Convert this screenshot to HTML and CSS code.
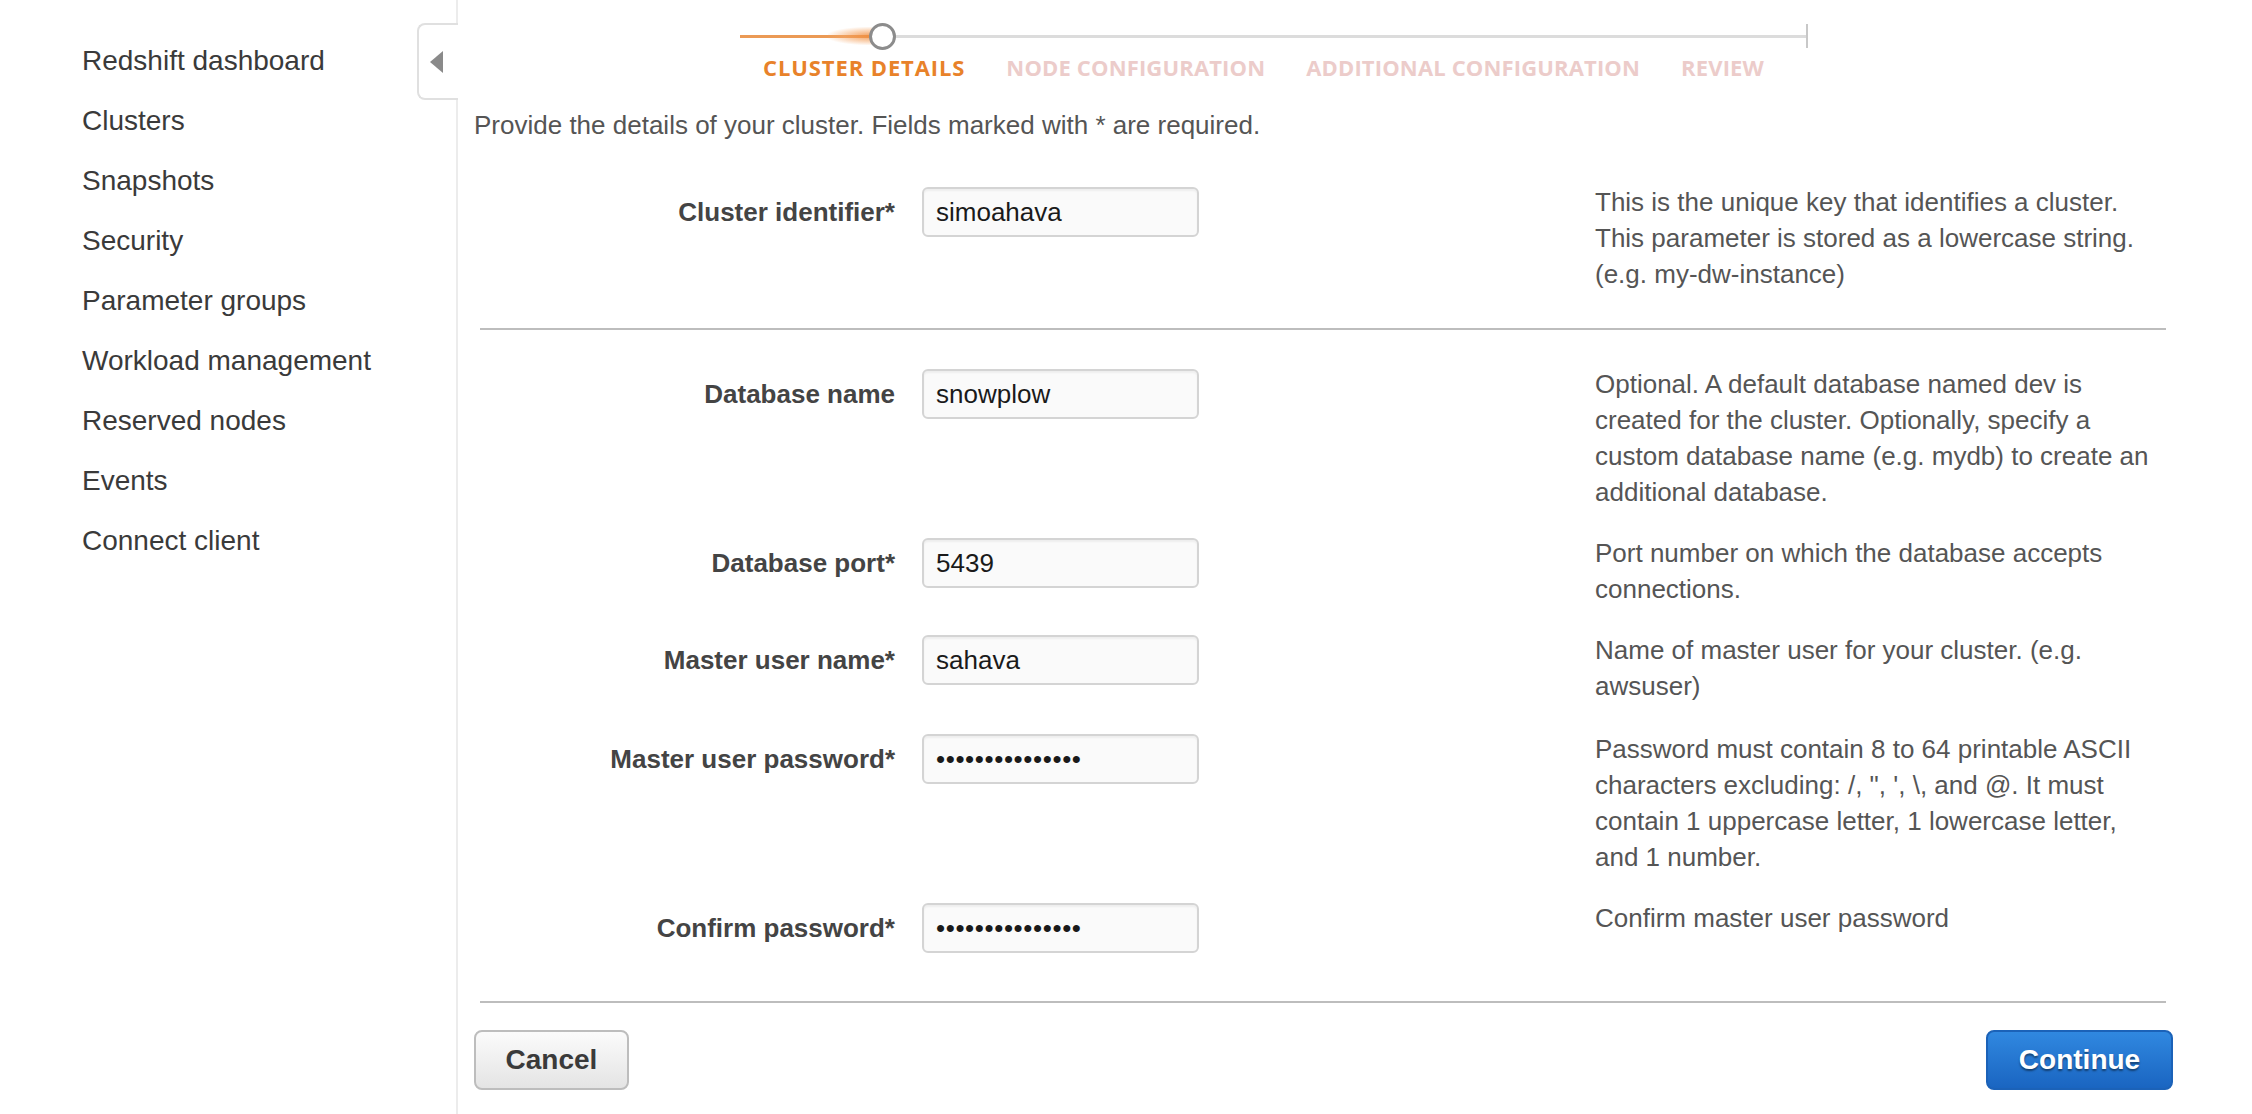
FILE: index.html
```html
<!DOCTYPE html>
<html lang="en">
<head>
<meta charset="utf-8">
<title>Redshift - Launch cluster</title>
<link rel="stylesheet" href="styles.css">
</head>
<body>
<nav class="sidebar">
  <ul class="nav-list">
    <li>Redshift dashboard</li>
    <li>Clusters</li>
    <li>Snapshots</li>
    <li>Security</li>
    <li>Parameter groups</li>
    <li>Workload management</li>
    <li>Reserved nodes</li>
    <li>Events</li>
    <li>Connect client</li>
  </ul>
  <div class="collapse-tab"><span class="collapse-arrow"></span></div>
</nav>
<main class="main">
  <div class="content">
    <div class="stepper">
      <div class="track-done"></div>
      <div class="track-glow"></div>
      <div class="track-todo"></div>
      <div class="track-end"></div>
      <div class="step-dot"></div>
    </div>
    <div class="step-labels">
      <span class="step step-active">CLUSTER DETAILS</span>
      <span class="step">NODE CONFIGURATION</span>
      <span class="step">ADDITIONAL CONFIGURATION</span>
      <span class="step">REVIEW</span>
    </div>
    <p class="intro">Provide the details of your cluster. Fields marked with * are required.</p>

    <div class="row row-first">
      <label class="field-label">Cluster identifier*</label>
      <input class="field-input" type="text" value="simoahava">
      <p class="help">This is the unique key that identifies a cluster. This parameter is stored as a lowercase string. (e.g. my-dw-instance)</p>
    </div>

    <hr class="sep sep-top">

    <div class="row">
      <label class="field-label">Database name</label>
      <input class="field-input" type="text" value="snowplow">
      <p class="help">Optional. A default database named dev is created for the cluster. Optionally, specify a custom database name (e.g. mydb) to create an additional database.</p>
    </div>
    <div class="row">
      <label class="field-label">Database port*</label>
      <input class="field-input" type="text" value="5439">
      <p class="help">Port number on which the database accepts connections.</p>
    </div>
    <div class="row">
      <label class="field-label">Master user name*</label>
      <input class="field-input" type="text" value="sahava">
      <p class="help">Name of master user for your cluster. (e.g. awsuser)</p>
    </div>
    <div class="row row-pw">
      <label class="field-label">Master user password*</label>
      <input class="field-input field-pw" type="password" value="abcdefghijklmno">
      <p class="help">Password must contain 8 to 64 printable ASCII characters excluding: /, ", ', \, and @. It must contain 1 uppercase letter, 1 lowercase letter, and 1 number.</p>
    </div>
    <div class="row">
      <label class="field-label">Confirm password*</label>
      <input class="field-input field-pw" type="password" value="abcdefghijklmno">
      <p class="help">Confirm master user password</p>
    </div>

    <hr class="sep sep-bottom">

    <div class="actions">
      <button class="btn btn-cancel">Cancel</button>
      <button class="btn btn-continue">Continue</button>
    </div>
  </div>
</main>
</body>
</html>
```

FILE: styles.css
```css
* { box-sizing: border-box; }

html, body {
  margin: 0;
  padding: 0;
  background: #ffffff;
}

body {
  display: flex;
  align-items: flex-start;
  min-height: 1114px;
  font-family: "Liberation Sans", Arial, Helvetica, sans-serif;
  color: #333;
}

/* ---------- sidebar ---------- */
.sidebar {
  position: relative;
  width: 458px;
  flex: 0 0 458px;
  min-height: 1114px;
  border-right: 2px solid #ececec;
}

.nav-list {
  list-style: none;
  margin: 0;
  padding: 31px 0 0 82px;
}

.nav-list li {
  font-size: 28px;
  line-height: 60px;
  height: 60px;
  color: #3a3a3a;
  white-space: nowrap;
}

.collapse-tab {
  position: absolute;
  top: 23px;
  right: -2px;
  width: 41px;
  height: 77px;
  background: #fff;
  border: 2px solid #e0e0e0;
  border-right: none;
  border-radius: 8px 0 0 8px;
  display: flex;
  align-items: center;
  justify-content: center;
}

.collapse-arrow {
  width: 0;
  height: 0;
  border-top: 11px solid transparent;
  border-bottom: 11px solid transparent;
  border-right: 13px solid #8a8a8a;
  margin-right: 4px;
}

/* ---------- main ---------- */
.main {
  flex: 1;
  padding-left: 16px;
}

.content {
  width: 1699px;
}

/* stepper */
.stepper {
  position: relative;
  margin-left: 266px;
  width: 1068px;
  height: 48px;
}

.track-done {
  position: absolute;
  left: 0;
  top: 35px;
  width: 132px;
  height: 3px;
  background: #eb9a55;
}

.track-glow {
  position: absolute;
  left: 88px;
  top: 27px;
  width: 44px;
  height: 18px;
  background: radial-gradient(ellipse at 100% 50%, rgba(240,140,60,0.85) 0%, rgba(245,165,100,0.45) 45%, rgba(255,255,255,0) 75%);
}

.track-todo {
  position: absolute;
  left: 150px;
  right: 0;
  top: 35px;
  height: 3px;
  background: #dcdcdc;
}

.track-end {
  position: absolute;
  right: 0;
  top: 24px;
  width: 2px;
  height: 24px;
  background: #c8c8c8;
}

.step-dot {
  position: absolute;
  left: 129px;
  top: 23px;
  width: 27px;
  height: 27px;
  border-radius: 50%;
  border: 3px solid #8c8c8c;
  background: #fff;
}

.step-labels {
  display: flex;
  gap: 41px;
  margin: 4px 0 0 289px;
  height: 30px;
}

.step {
  font-family: "Open Sans", "Liberation Sans", sans-serif;
  font-weight: 700;
  font-size: 22px;
  line-height: 30px;
  color: #ecccca;
  letter-spacing: 0.15px;
  white-space: nowrap;
}

.step-active {
  color: #e8822a;
  letter-spacing: 0.9px;
}

.intro {
  margin: 25px 0 0 0;
  font-size: 26px;
  line-height: 36px;
  color: #555;
}

/* form rows */
.row {
  display: flex;
  align-items: flex-start;
  margin-top: 28px;
}

.row-first {
  margin-top: 44px;
}

.row-pw {
  margin-top: 30px;
}

.field-label {
  width: 421px;
  flex: 0 0 421px;
  text-align: right;
  font-size: 26px;
  font-weight: 700;
  line-height: 50px;
  color: #444;
  white-space: nowrap;
}

.field-input {
  flex: 0 0 277px;
  width: 277px;
  height: 50px;
  margin-left: 27px;
  padding: 0 12px;
  border: 2px solid #d4d4d4;
  border-radius: 6px;
  background: #fafafa;
  box-shadow: inset 0 2px 2px rgba(0,0,0,0.05);
  font-family: "Liberation Sans", Arial, sans-serif;
  font-size: 26px;
  color: #1a1a1a;
  outline: none;
}

.field-pw {
  letter-spacing: 0.6px;
}

.help {
  width: 564px;
  flex: 0 0 564px;
  margin: -3px 0 0 396px;
  font-size: 26px;
  line-height: 36px;
  color: #555;
}

.sep {
  margin: 0 7px 0 6px;
  border: none;
  height: 2px;
  background: #bdbdbd;
}

.sep-top {
  margin-top: 36px;
  margin-bottom: 39px;
}

.sep-bottom {
  margin-top: 48px;
}

/* actions */
.actions {
  display: flex;
  justify-content: space-between;
  margin-top: 27px;
}

.btn {
  height: 60px;
  border-radius: 8px;
  font-family: "Liberation Sans", Arial, sans-serif;
  font-weight: 700;
  font-size: 28px;
  cursor: pointer;
}

.btn-cancel {
  width: 155px;
  border: 2px solid #bdbdbd;
  background: linear-gradient(#fbfbfb, #e4e4e4);
  color: #3a3a3a;
}

.btn-continue {
  width: 187px;
  border: 2px solid #1b62b8;
  background: linear-gradient(#3088e0, #1a65c1);
  color: #fff;
  text-shadow: 0 2px 2px rgba(0,0,0,0.45);
}
```
